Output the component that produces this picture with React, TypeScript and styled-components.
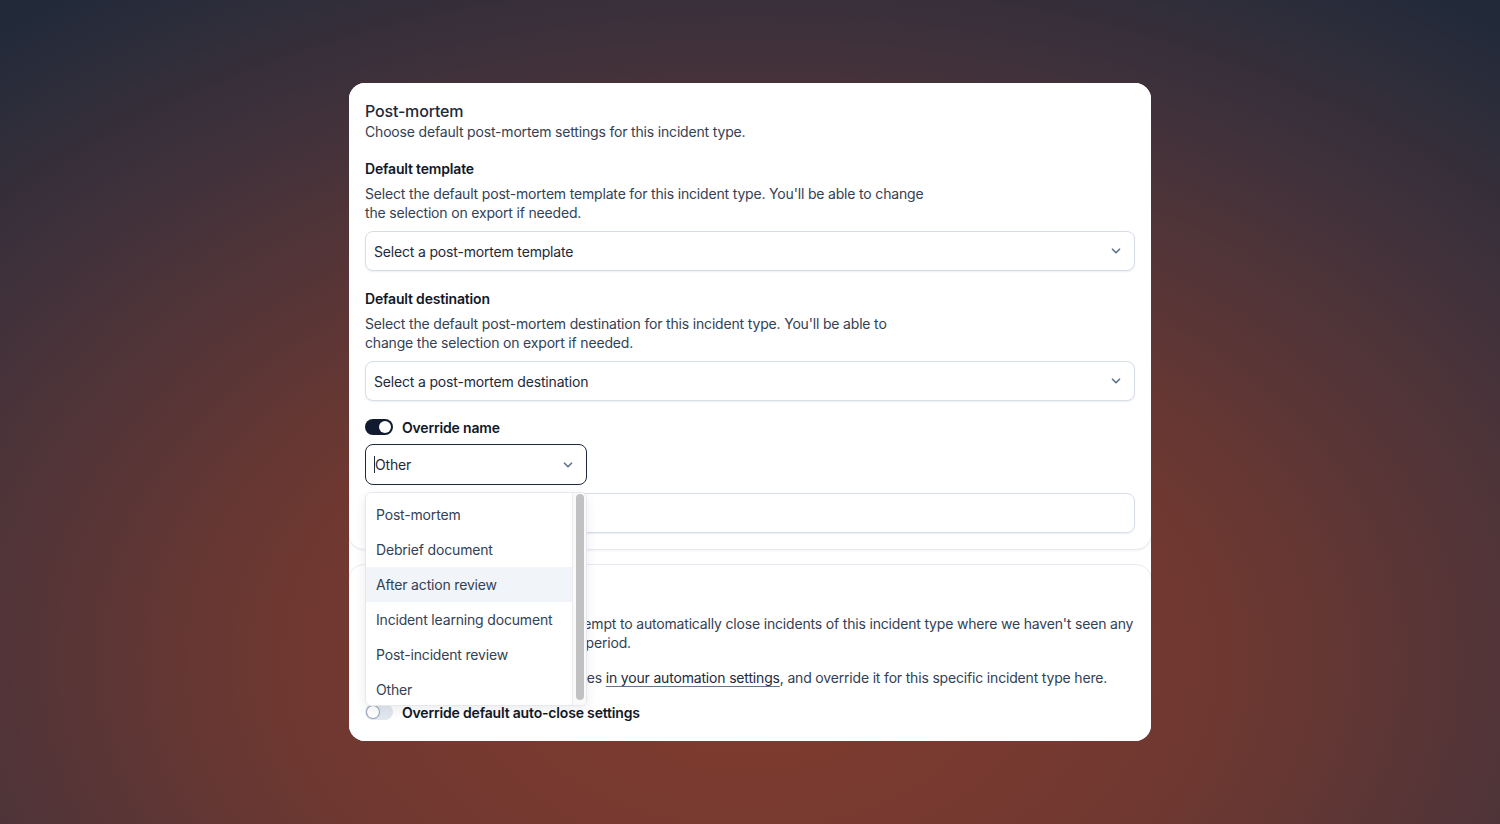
import React from "react";
import styled, { createGlobalStyle } from "styled-components";
import { ChevronDown } from "lucide-react";

const GlobalStyle = createGlobalStyle`
  * {
    box-sizing: border-box;
  }
  html,
  body {
    margin: 0;
    padding: 0;
    height: 100%;
  }
  body {
    font-family: Inter, "Noto Sans", "Liberation Sans", sans-serif;
    letter-spacing: -0.011em;
    -webkit-font-smoothing: antialiased;
  }
`;

const nameOptions = [
  "Post-mortem",
  "Debrief document",
  "After action review",
  "Incident learning document",
  "Post-incident review",
  "Other",
];

export default function App() {
  return (
    <>
      <GlobalStyle />
      <Page>
        <Frame>
          {/* post-mortem settings */}
          <Card>
            <CardTitle>Post-mortem</CardTitle>
            <CardSubtitle>
              Choose default post-mortem settings for this incident type.
            </CardSubtitle>

            <Field>
              <FieldLabel>Default template</FieldLabel>
              <FieldHelp>
                Select the default post-mortem template for this incident type.
                You'll be able to change the selection on export if needed.
              </FieldHelp>
              <Select>
                <span>Select a post-mortem template</span>
                <ChevronDown size={14} strokeWidth={3} color="#64748b" />
              </Select>
            </Field>

            <Field>
              <FieldLabel>Default destination</FieldLabel>
              <FieldHelp>
                Select the default post-mortem destination for this incident
                type. You'll be able to change the selection on export if
                needed.
              </FieldHelp>
              <Select>
                <span>Select a post-mortem destination</span>
                <ChevronDown size={14} strokeWidth={3} color="#64748b" />
              </Select>
            </Field>

            <ToggleRow $top={16}>
              <Toggle $on />
              <ToggleLabel>Override name</ToggleLabel>
            </ToggleRow>

            <NameSelectWrap>
              <Select $focused $width={222}>
                <ValueText>
                  <Caret />
                  Other
                </ValueText>
                <ChevronDown size={14} strokeWidth={3} color="#64748b" />
              </Select>
              <Menu>
                <MenuList>
                  {nameOptions.map((opt) => (
                    <MenuItem key={opt} $active={opt === "After action review"}>
                      {opt}
                    </MenuItem>
                  ))}
                </MenuList>
                <ScrollTrack>
                  <ScrollThumb />
                </ScrollTrack>
              </Menu>
            </NameSelectWrap>

            <TextInput />
          </Card>

          {/* auto-close settings */}
          <Card>
            <CardTitle>Auto-close</CardTitle>
            <Paragraph $top={8}>
              If auto-close is turned on, we'll attempt to automatically close
              incidents of this incident type where we haven't seen any
              activity for the specified inactivity period.
            </Paragraph>
            <Paragraph $top={16}>
              You can add default auto-close rules{" "}
              <Link>in your automation settings</Link>, and override it for
              this specific incident type here.
            </Paragraph>
            <ToggleRow $top={15}>
              <Toggle />
              <ToggleLabel>Override default auto-close settings</ToggleLabel>
            </ToggleRow>
          </Card>
        </Frame>
      </Page>
    </>
  );
}

const Page = styled.div`
  width: 100%;
  height: 100vh;
  display: flex;
  align-items: center;
  justify-content: center;
  background-color: #222a3a;
  background-image: radial-gradient(
    ellipse 80% 98% at 50% 80%,
    #833b2e 0%,
    #6e3831 40%,
    #48333a 70%,
    #222a3a 100%
  );
`;

const Frame = styled.div`
  width: 802px;
  height: 658px;
  display: flex;
  flex-direction: column;
  gap: 16px;
  background: #ffffff;
  border-radius: 16px;
  overflow: hidden;
`;

const Card = styled.section`
  display: flex;
  flex-direction: column;
  padding: 16px;
  border: 1px solid #e6ebf1;
  border-radius: 16px;
  margin: -1px;
  background: #ffffff;
  &:first-child {
    box-shadow: 0 1px 2px rgba(15, 23, 42, 0.05);
  }
  &:last-child {
    flex: 1;
    padding-top: 17px;
  }
`;

const CardTitle = styled.h2`
  margin: 0;
  font-size: 16px;
  line-height: 24px;
  font-weight: 500;
  color: #1e293b;
`;

const CardSubtitle = styled.p`
  margin: -1px 0 0;
  font-size: 14px;
  line-height: 20px;
  color: #334155;
`;

const Field = styled.div`
  display: flex;
  flex-direction: column;
  margin-top: 17px;
  & + & {
    margin-top: 18px;
  }
`;

const FieldLabel = styled.div`
  font-size: 14px;
  line-height: 20px;
  font-weight: 600;
  color: #111827;
`;

const FieldHelp = styled.p`
  margin: 5px 0 0;
  max-width: 560px;
  font-size: 14px;
  line-height: 19px;
  color: #334155;
`;

const Select = styled.div<{ $focused?: boolean; $width?: number }>`
  display: flex;
  align-items: center;
  justify-content: space-between;
  width: ${({ $width }) => ($width ? `${$width}px` : "100%")};
  height: ${({ $focused }) => ($focused ? "41px" : "40px")};
  margin-top: ${({ $focused }) => ($focused ? "0" : "9px")};
  padding: 0 11px 0 8px;
  border: 1px solid ${({ $focused }) => ($focused ? "#1e293b" : "#d6dde7")};
  border-radius: 8px;
  background: #ffffff;
  box-shadow: ${({ $focused }) =>
    $focused ? "none" : "0 1px 2px rgba(15, 23, 42, 0.07)"};
  font-size: 14px;
  color: #1e293b;
`;

const ValueText = styled.span`
  display: inline-flex;
  align-items: center;
`;

const Caret = styled.span`
  display: inline-block;
  width: 1px;
  height: 17px;
  background: #1e293b;
`;

const ToggleRow = styled.div<{ $top: number }>`
  display: flex;
  align-items: center;
  gap: 9px;
  margin-top: ${({ $top }) => $top}px;
  height: 20px;
`;

const Toggle = styled.span<{ $on?: boolean }>`
  position: relative;
  display: inline-block;
  width: 28px;
  height: 16px;
  border-radius: 999px;
  background: ${({ $on }) => ($on ? "#111a2e" : "#e2e8f0")};
  &::after {
    content: "";
    position: absolute;
    top: 2px;
    left: ${({ $on }) => ($on ? "14px" : "2px")};
    width: 12px;
    height: 12px;
    border-radius: 50%;
    background: #ffffff;
    box-shadow: ${({ $on }) => ($on ? "none" : "0 0 0 1px #94a3b8")};
  }
`;

const ToggleLabel = styled.span`
  font-size: 14px;
  font-weight: 600;
  color: #111827;
`;

const NameSelectWrap = styled.div`
  position: relative;
  margin-top: 7px;
  width: 222px;
`;

const Menu = styled.div`
  position: absolute;
  top: 48px;
  left: 0;
  z-index: 10;
  display: flex;
  width: 222px;
  height: 214px;
  background: #ffffff;
  border: 1px solid #e5e9ef;
  border-radius: 6px;
  overflow: hidden;
  box-shadow: 0 4px 12px rgba(15, 23, 42, 0.08);
`;

const MenuList = styled.ul`
  flex: 1;
  margin: 0;
  padding: 4px 0 0;
  list-style: none;
  overflow: hidden;
`;

const MenuItem = styled.li<{ $active?: boolean }>`
  height: 35px;
  display: flex;
  align-items: center;
  padding: 0 10px;
  font-size: 14px;
  color: #334155;
  background: ${({ $active }) => ($active ? "#f1f4f9" : "transparent")};
`;

const ScrollTrack = styled.div`
  width: 14px;
  padding: 1px 2px 5px 3px;
  background: #fafafa;
  border-left: 1px solid #ececec;
`;

const ScrollThumb = styled.div`
  height: 100%;
  border-radius: 4px;
  background: #c1c1c1;
`;

const TextInput = styled.div`
  height: 40px;
  margin-top: 8px;
  border: 1px solid #d6dde7;
  border-radius: 8px;
  box-shadow: 0 1px 2px rgba(15, 23, 42, 0.07);
`;

const Paragraph = styled.p<{ $top: number }>`
  margin: ${({ $top }) => $top}px 0 0;
  font-size: 14px;
  line-height: 19px;
  color: #334155;
`;

const Link = styled.a`
  color: #1e293b;
  text-decoration: underline;
  text-decoration-color: #64748b;
  text-underline-offset: 3px;
  cursor: pointer;
`;
